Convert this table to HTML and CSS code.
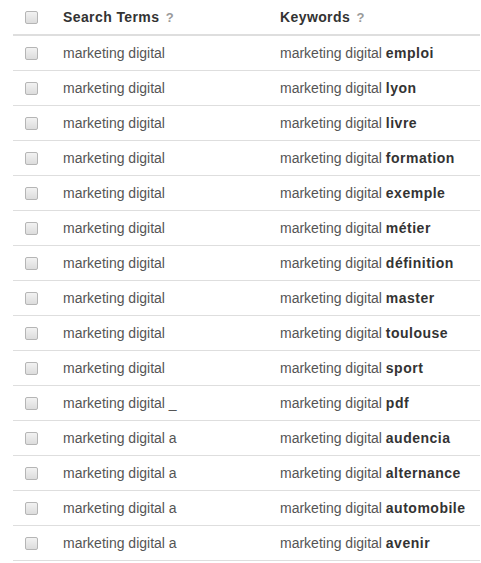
FILE: index.html
```html
<!DOCTYPE html>
<html>
<head>
<meta charset="utf-8">
<link rel="stylesheet" href="styles.css">
</head>
<body>
<div class="table">
  <div class="row head">
    <div class="cell check"><span class="box"></span></div>
    <div class="cell">Search Terms <span class="q">?</span></div>
    <div class="cell">Keywords <span class="q">?</span></div>
  </div>
  <div class="row"><div class="cell check"><span class="box"></span></div><div class="cell">marketing digital</div><div class="cell">marketing digital <b>emploi</b></div></div>
  <div class="row"><div class="cell check"><span class="box"></span></div><div class="cell">marketing digital</div><div class="cell">marketing digital <b>lyon</b></div></div>
  <div class="row"><div class="cell check"><span class="box"></span></div><div class="cell">marketing digital</div><div class="cell">marketing digital <b>livre</b></div></div>
  <div class="row"><div class="cell check"><span class="box"></span></div><div class="cell">marketing digital</div><div class="cell">marketing digital <b>formation</b></div></div>
  <div class="row"><div class="cell check"><span class="box"></span></div><div class="cell">marketing digital</div><div class="cell">marketing digital <b>exemple</b></div></div>
  <div class="row"><div class="cell check"><span class="box"></span></div><div class="cell">marketing digital</div><div class="cell">marketing digital <b>métier</b></div></div>
  <div class="row"><div class="cell check"><span class="box"></span></div><div class="cell">marketing digital</div><div class="cell">marketing digital <b>définition</b></div></div>
  <div class="row"><div class="cell check"><span class="box"></span></div><div class="cell">marketing digital</div><div class="cell">marketing digital <b>master</b></div></div>
  <div class="row"><div class="cell check"><span class="box"></span></div><div class="cell">marketing digital</div><div class="cell">marketing digital <b>toulouse</b></div></div>
  <div class="row"><div class="cell check"><span class="box"></span></div><div class="cell">marketing digital</div><div class="cell">marketing digital <b>sport</b></div></div>
  <div class="row"><div class="cell check"><span class="box"></span></div><div class="cell">marketing digital _</div><div class="cell">marketing digital <b>pdf</b></div></div>
  <div class="row"><div class="cell check"><span class="box"></span></div><div class="cell">marketing digital a</div><div class="cell">marketing digital <b>audencia</b></div></div>
  <div class="row"><div class="cell check"><span class="box"></span></div><div class="cell">marketing digital a</div><div class="cell">marketing digital <b>alternance</b></div></div>
  <div class="row"><div class="cell check"><span class="box"></span></div><div class="cell">marketing digital a</div><div class="cell">marketing digital <b>automobile</b></div></div>
  <div class="row"><div class="cell check"><span class="box"></span></div><div class="cell">marketing digital a</div><div class="cell">marketing digital <b>avenir</b></div></div>
</div>
</body>
</html>
```
FILE: styles.css
```css
html, body {
  margin: 0;
  padding: 0;
  background: #fff;
}
body {
  font-family: "Liberation Sans", Arial, sans-serif;
  font-size: 14px;
  color: #555;
}
.table {
  margin-left: 13px;
  width: 467px;
}
.row {
  display: grid;
  grid-template-columns: 50px 217px 1fr;
  height: 34px;
  border-bottom: 1px solid #dedede;
  align-items: center;
}
.row.head {
  border-bottom: 2px solid #dedede;
  font-weight: bold;
  color: #333;
  letter-spacing: 0.4px;
}
.cell {
  white-space: nowrap;
}
.check {
  display: flex;
  align-items: center;
  padding-left: 12px;
}
.box {
  display: block;
  width: 11px;
  height: 11px;
  border: 1px solid #b5b5b5;
  border-radius: 2px;
  background: linear-gradient(#f2f2f2, #dcdcdc);
}
.q {
  color: #9a9a9a;
  font-size: 13px;
  margin-left: 2px;
}
b {
  color: #333;
  font-weight: bold;
  letter-spacing: 0.5px;
}
```
